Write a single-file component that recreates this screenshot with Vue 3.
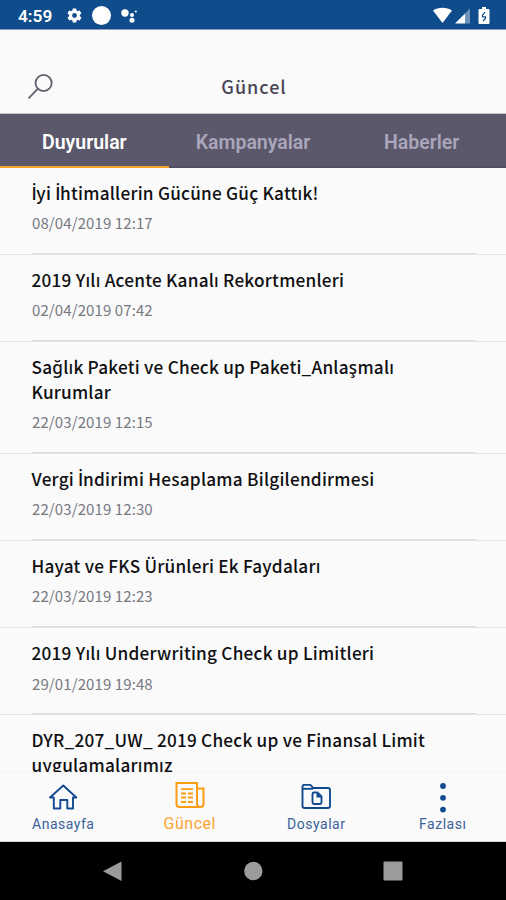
<script setup>
const tabs = ['Duyurular', 'Kampanyalar', 'Haberler']
const items = [
  { title: 'İyi İhtimallerin Gücüne Güç Kattık!', date: '08/04/2019 12:17' },
  { title: '2019 Yılı Acente Kanalı Rekortmenleri', date: '02/04/2019 07:42' },
  { title: 'Sağlık Paketi ve Check up Paketi_Anlaşmalı Kurumlar', date: '22/03/2019 12:15' },
  { title: 'Vergi İndirimi Hesaplama Bilgilendirmesi', date: '22/03/2019 12:30' },
  { title: 'Hayat ve FKS Ürünleri Ek Faydaları', date: '22/03/2019 12:23' },
  { title: '2019 Yılı Underwriting Check up Limitleri', date: '29/01/2019 19:48' },
  { title: 'DYR_207_UW_ 2019 Check up ve Finansal Limit uygulamalarımız', date: '' },
]
const parts = (title) => title.split(/(İ)/).filter(Boolean)
</script>

<template>
  <div class="phone">
    <div class="status">
      <span class="time">4:59</span>
      <svg class="gear" viewBox="0 0 24 24"><path fill="#fff" fill-rule="evenodd" d="M19.400 13c.1-.3.1-.7.1-1s0-.7-.1-1l2.100-1.600c.2-.2.2-.4.1-.6l-2-3.500c-.1-.2-.4-.3-.6-.2l-2.500 1c-.5-.4-1.100-.7-1.700-1l-.4-2.600c0-.2-.2-.4-.5-.4h-4c-.2 0-.4.2-.5.4l-.4 2.600c-.6.3-1.200.6-1.700 1l-2.500-1c-.2-.1-.5 0-.6.2l-2 3.500c-.1.2-.1.5.1.6L4.500 11c0 .3-.1.7-.1 1s0 .7.1 1l-2.100 1.600c-.2.2-.2.4-.1.6l2 3.500c.1.2.4.3.6.2l2.500-1c.5.4 1.100.7 1.700 1l.4 2.600c0 .2.2.4.5.4h4c.2 0 .4-.2.5-.4l.4-2.600c.6-.3 1.200-.6 1.700-1l2.500 1c.2.1.5 0 .6-.2l2-3.500c.1-.2.1-.5-.1-.6zM12 15.400a3.400 3.400 0 1 1 0-6.800 3.400 3.400 0 0 1 0 6.800z"/></svg>
      <span class="disc"></span>
      <svg class="assist" viewBox="0 0 17 16"><g fill="#fff"><circle cx="4" cy="5" r="3.700"/><circle cx="11" cy="6.900" r="2"/><circle cx="11" cy="12.300" r="2.500"/><circle cx="14.800" cy="3.500" r="1.100"/></g></svg>
      <svg class="signals" viewBox="0 0 60 18">
        <path fill="#fff" d="M1 3.500C6-.2 15-.2 20 3.500L10.500 16z"/>
        <path fill="#fff" d="M23 16.500 33 6.500v10z"/>
        <path fill="#6d95be" d="M33 6.500 38 1.500v15h-5z"/>
        <path fill="#fff" d="M47.500 2h2.500V0h4v2h2.500q1 0 1 1v13q0 1-1 1h-9q-1 0-1-1V3q0-1 1-1z"/>
        <path fill="none" stroke="#0f4c8c" stroke-width="1.200" d="M53 5.200 50.500 8.200v1.600h3v1.600l-2.500 2.600"/>
      </svg>
    </div>

    <header class="header">
      <svg class="search" viewBox="0 0 26 26"><g fill="none" stroke="#605d6b" stroke-width="1.800"><circle cx="15.600" cy="9" r="8.100"/><path d="M9.900 14.700.500 24.500"/></g></svg>
      <h1>Güncel</h1>
    </header>

    <nav class="tabs">
      <span v-for="(t, i) in tabs" :key="t" class="tab" :class="{ active: i === 0 }">{{ t }}</span>
    </nav>

    <main class="list">
      <article v-for="item in items" :key="item.title" class="row">
        <div class="content">
          <h2><span v-for="(p, i) in parts(item.title)" :key="i" :class="{ dotted: p === 'İ' }">{{ p }}</span></h2>
          <time>{{ item.date }}</time>
        </div>
      </article>
    </main>

    <nav class="bottom">
      <div class="item">
        <svg width="30" height="26" viewBox="0 0 30 26"><path fill="none" stroke="#124a91" stroke-width="1.900" stroke-linejoin="round" stroke-linecap="round" d="M2 13.500 15.300 1.500l13 12h-3.300V24.500h-5.700V16h-7v8.500H5.800v-11z"/></svg>
        <span>Anasayfa</span>
      </div>
      <div class="item on">
        <svg width="30" height="26" viewBox="0 0 30 26"><g fill="none" stroke="#fb9c13" stroke-width="2"><path d="M22 22V1H1.500v21q0 3 3 3h21q3 0 3-3V6.500H22V22q0 3 3 3"/><path stroke-width="1.800" d="M6 7.200h12M6 11.500h5M13 11.500h5M6 15.500h5M13 15.500h5M6 20h5M13 20h5"/></g></svg>
        <span>Güncel</span>
      </div>
      <div class="item">
        <svg width="30" height="26" viewBox="0 0 30 26"><g fill="none" stroke="#124a91" stroke-width="1.900" stroke-linejoin="round"><path d="M1.500 4v18q0 2 2 2h23.500q2 0 2-2V6q0-2-2-2H12L10.500 2q-1-1.200-2-1.200H3.500q-2 0-2 2z"/><path d="M2 4.800h10"/><path d="M13 8.500h3.500l4 4v6q0 1.500-1.500 1.500h-6q-1.500 0-1.500-1.500V10q0-1.500 1.500-1.500z"/></g><path fill="#124a91" d="M15.500 8 21 13.500h-5.500z"/></svg>
        <span>Dosyalar</span>
      </div>
      <div class="item">
        <svg width="30" height="30" viewBox="0 0 30 30"><g fill="#124a91"><circle cx="15" cy="3" r="2.900"/><circle cx="15" cy="14.800" r="2.900"/><circle cx="15" cy="26.600" r="2.900"/></g></svg>
        <span>Fazlası</span>
      </div>
    </nav>

    <footer class="system">
      <svg width="20" height="20" viewBox="0 0 20 20"><path fill="#9b9b9b" d="M1 10.300 19.500.5v19.500z"/></svg>
      <svg width="20" height="20" viewBox="0 0 20 20"><circle fill="#9b9b9b" cx="10.300" cy="10" r="9.200"/></svg>
      <svg width="20" height="20" viewBox="0 0 20 20"><rect fill="#9b9b9b" x=".5" y=".5" width="19" height="19" rx="1"/></svg>
    </footer>
  </div>
</template>

<style>
body { margin: 0; }
</style>

<style scoped>
.phone { width: 506px; height: 900px; display: flex; flex-direction: column; overflow: hidden; background: #fafafa; font-family: "Noto Sans CJK JP", "Noto Sans", sans-serif; }
.status { height: 30px; box-sizing: border-box; flex: none; display: flex; align-items: center; background: #0f4c8c; border-bottom: 1px solid #8f9cc0; padding: 2px 14px 0 18px; }
.time { width: 48px; color: #fff; font: 600 17.300px/26px Roboto, sans-serif; }
.gear { width: 17px; height: 17px; }
.disc { width: 19px; height: 19px; margin-left: 9px; border-radius: 50%; background: #fff; }
.assist { width: 17px; height: 16px; margin-left: 10px; }
.signals { width: 60px; height: 18px; margin-left: auto; }
.header { height: 84px; flex: none; box-sizing: border-box; padding: 42px 28px 0 28px; display: grid; grid-template-columns: 26px 1fr 26px; border-bottom: 1px solid #c4c3ca; }
.search { width: 26px; height: 26px; margin-top: 2px; }
h1 { margin: 0 0 0 2px; text-align: center; color: #484455; font-size: 18px; line-height: 28px; font-weight: 500; letter-spacing: 1px; }
.tabs { height: 54px; flex: none; display: grid; grid-template-columns: repeat(3, 1fr); background: #5c586b; }
.tab { box-sizing: border-box; text-align: center; color: #aaa6bb; font: 600 19.500px/57px Roboto, sans-serif; height: 54px; border-bottom: 2px solid #524e62; }
.tab.active { color: #fff; border-bottom-color: #f5a32b; }
.list { flex: 1; min-height: 0; overflow: hidden; }
.row { border-bottom: 1px solid #e2e2e2; padding: 0 30px 0 32px; }
.content { padding-top: 13px; border-bottom: 1px solid #dcdcdc; }
h2 { margin: 0 0 0 -.5px; max-width: 410px; color: #101012; font-size: 17.200px; font-weight: 500; line-height: 24.300px; letter-spacing: .23px; }
.dotted { font-family: "Open Sans", "Noto Sans", sans-serif; font-weight: 600; line-height: 1; letter-spacing: -.4px; }
time { display: block; color: #777982; font-size: 15px; letter-spacing: .1px; line-height: 20px; padding: 8px 0 19.900px; }
.bottom { height: 70px; flex: none; display: grid; grid-template-columns: repeat(4, 1fr); border-bottom: 1px solid #d8d8d8; border-top: 1px solid #f3f3f3; box-sizing: border-box; }
.item { display: flex; flex-direction: column; align-items: center; padding-top: 11px; color: #3b6299; }
.item span { font: 400 14px/18px Roboto, sans-serif; letter-spacing: .5px; margin-top: 5px; }
.item.on { color: #fba331; padding-top: 9px; }
.item.on span { font-size: 16px; margin-top: 7px; }
.item:last-child { padding-top: 10px; }
.item:last-child span { margin-top: 2px; }
.system { height: 58px; flex: none; background: #000; display: flex; justify-content: space-between; align-items: center; padding: 0 103px 0 102px; }
</style>
